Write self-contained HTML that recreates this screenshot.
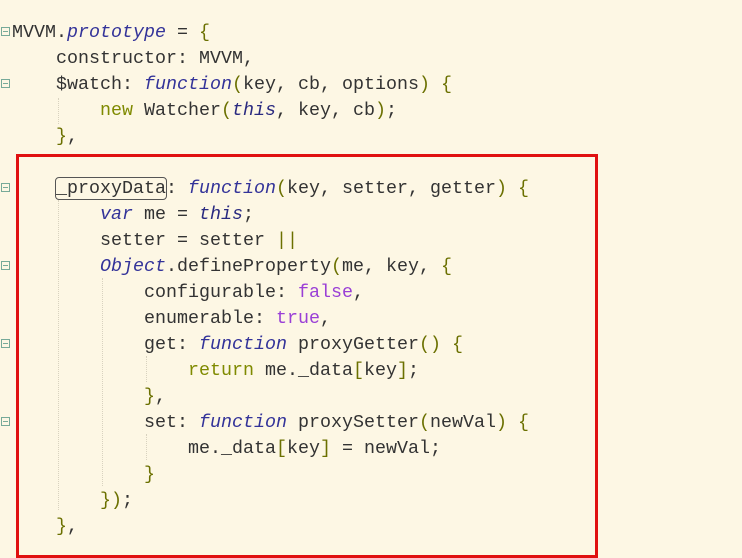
<!DOCTYPE html>
<html><head><style>
body{margin:0;width:742px;height:557px;background:#fdf7e4;overflow:hidden;position:relative;font-family:"Liberation Mono",monospace;}
.code{position:absolute;left:12px;top:20px;font-size:18.33px;line-height:26px;color:#333;white-space:pre;}
.k{color:#333399;font-style:italic}
.t{color:#2a2a80;font-style:italic}
.o{color:#6b7000}
.n{color:#7f8a00}
.b{color:#9a3fd6}
.box{position:absolute;left:16px;top:154px;width:576px;height:398px;border:3px solid #e01010;}
.hl{outline:1px solid #555;border-radius:3px}
.f{position:absolute;left:1px;width:7px;height:7px;border:1px solid #7a9;font-size:0}
.f:after{content:"";position:absolute;left:1px;top:3px;width:5px;height:1px;background:#7a9}
.g{position:absolute;width:0;border-left:1px dotted #d8d2bf}
</style></head><body>
<div class="f" style="top:27px"></div>
<div class="f" style="top:79px"></div>
<div class="f" style="top:183px"></div>
<div class="f" style="top:261px"></div>
<div class="f" style="top:339px"></div>
<div class="f" style="top:417px"></div>
<div class="g" style="left:58px;top:98px;height:26px"></div>
<div class="g" style="left:58px;top:200px;height:310px"></div>
<div class="g" style="left:102px;top:278px;height:208px"></div>
<div class="g" style="left:146px;top:356px;height:26px"></div>
<div class="g" style="left:146px;top:434px;height:26px"></div>
<div class="code">MVVM.<span class="k">prototype</span> = <span class="o">{</span>
    constructor: MVVM,
    $watch: <span class="k">function</span><span class="o">(</span>key, cb, options<span class="o">)</span> <span class="o">{</span>
        <span class="n">new</span> Watcher<span class="o">(</span><span class="t">this</span>, key, cb<span class="o">)</span>;
    <span class="o">}</span>,

    <span class="hl">_proxyData</span>: <span class="k">function</span><span class="o">(</span>key, setter, getter<span class="o">)</span> <span class="o">{</span>
        <span class="k">var</span> me = <span class="t">this</span>;
        setter = setter <span class="o">||</span>
        <span class="k">Object</span>.defineProperty<span class="o">(</span>me, key, <span class="o">{</span>
            configurable: <span class="b">false</span>,
            enumerable: <span class="b">true</span>,
            get: <span class="k">function</span> proxyGetter<span class="o">()</span> <span class="o">{</span>
                <span class="n">return</span> me._data<span class="o">[</span>key<span class="o">]</span>;
            <span class="o">}</span>,
            set: <span class="k">function</span> proxySetter<span class="o">(</span>newVal<span class="o">)</span> <span class="o">{</span>
                me._data<span class="o">[</span>key<span class="o">]</span> = newVal;
            <span class="o">}</span>
        <span class="o">})</span>;
    <span class="o">}</span>,</div>
<div class="box"></div>
</body></html>
